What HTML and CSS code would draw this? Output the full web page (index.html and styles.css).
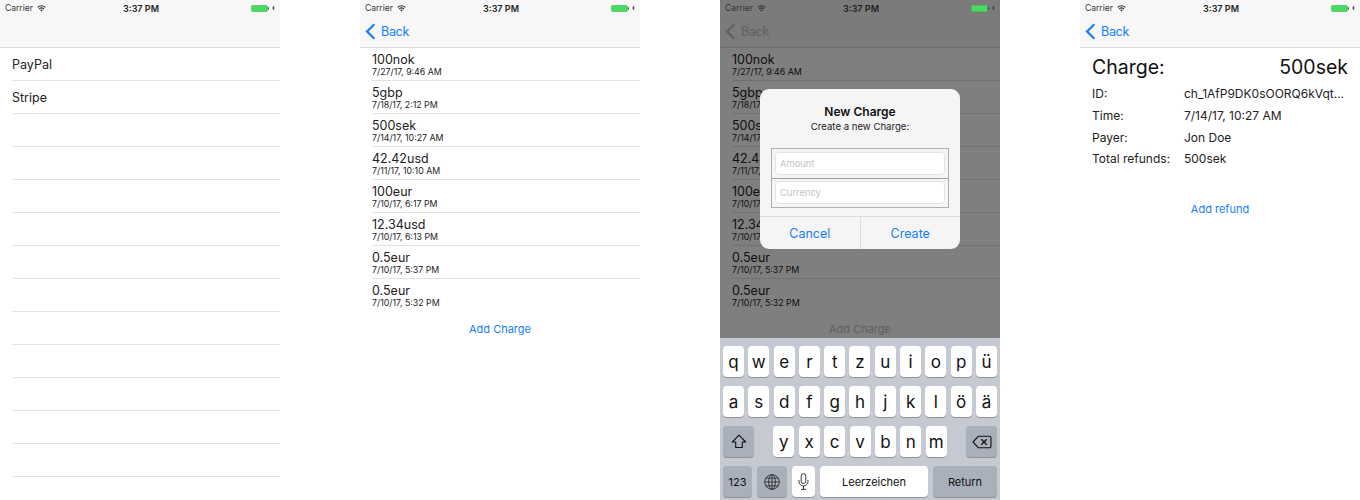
FILE: index.html
```html
<!DOCTYPE html>
<html lang="en">
<head>
  <meta charset="UTF-8">
  <title>Charges</title>
  <link rel="stylesheet" href="styles.css">
</head>
<body>
  <svg class="defs" width="0" height="0">
    <symbol id="wifi" viewBox="0 0 12 9">
      <path d="M6 8.6 4.3 6.7a2.6 2.6 0 0 1 3.4 0zM3.4 5.7l-1-1.1a5.4 5.4 0 0 1 7.2 0l-1 1.1a4 4 0 0 0-5.2 0zM1.5 3.6.4 2.4a8.3 8.3 0 0 1 11.2 0l-1.1 1.2a6.8 6.8 0 0 0-9 0z"/>
    </symbol>
    <symbol id="battery" viewBox="0 0 25 9">
      <rect x=".5" y=".5" width="21" height="8" rx="1.5" fill="#4cd964" stroke="#44c25a"/>
      <rect x="22.3" y="3" width="1.2" height="3" fill="#333"/>
    </symbol>
    <symbol id="bolt" viewBox="0 0 4 8">
      <path d="M2.6 0 .2 4.5h1.5L1.3 8l2.5-4.6H2.2z"/>
    </symbol>
    <symbol id="chevron" viewBox="0 0 11 17">
      <path d="M9.4 1.2 2 8.5l7.4 7.3" fill="none" stroke="currentColor" stroke-width="2.2"/>
    </symbol>
  </svg>

  <div class="screens">

    <section class="phone">
      <header class="nav">
        <div class="status">
          <span class="carrier">Carrier <svg class="wifi"><use href="#wifi"/></svg></span>
          <span class="time">3:37 PM</span>
          <span class="power"><svg class="battery"><use href="#battery"/></svg><svg class="bolt"><use href="#bolt"/></svg></span>
        </div>
        <div class="nav-bar"></div>
      </header>
      <ul class="list">
        <li class="row row-single">PayPal</li>
        <li class="row row-single">Stripe</li>
        <li class="row"></li>
        <li class="row"></li>
        <li class="row"></li>
        <li class="row"></li>
        <li class="row"></li>
        <li class="row"></li>
        <li class="row"></li>
        <li class="row"></li>
        <li class="row"></li>
        <li class="row"></li>
        <li class="row"></li>
      </ul>
    </section>

    <section class="phone">
      <header class="nav">
        <div class="status">
          <span class="carrier">Carrier <svg class="wifi"><use href="#wifi"/></svg></span>
          <span class="time">3:37 PM</span>
          <span class="power"><svg class="battery"><use href="#battery"/></svg><svg class="bolt"><use href="#bolt"/></svg></span>
        </div>
        <div class="nav-bar"><a class="back"><svg class="chevron"><use href="#chevron"/></svg>Back</a></div>
      </header>
      <ul class="list">
        <li class="row"><div class="amount">100nok</div><div class="date">7/27/17, 9:46 AM</div></li>
        <li class="row"><div class="amount">5gbp</div><div class="date">7/18/17, 2:12 PM</div></li>
        <li class="row"><div class="amount">500sek</div><div class="date">7/14/17, 10:27 AM</div></li>
        <li class="row"><div class="amount">42.42usd</div><div class="date">7/11/17, 10:10 AM</div></li>
        <li class="row"><div class="amount">100eur</div><div class="date">7/10/17, 6:17 PM</div></li>
        <li class="row"><div class="amount">12.34usd</div><div class="date">7/10/17, 6:13 PM</div></li>
        <li class="row"><div class="amount">0.5eur</div><div class="date">7/10/17, 5:37 PM</div></li>
        <li class="row row-last"><div class="amount">0.5eur</div><div class="date">7/10/17, 5:32 PM</div></li>
      </ul>
      <a class="link link-charge">Add Charge</a>
    </section>

    <section class="phone">
      <div class="dimmed">
        <header class="nav">
          <div class="status">
            <span class="carrier">Carrier <svg class="wifi"><use href="#wifi"/></svg></span>
            <span class="time">3:37 PM</span>
            <span class="power"><svg class="battery"><use href="#battery"/></svg><svg class="bolt"><use href="#bolt"/></svg></span>
          </div>
          <div class="nav-bar"><a class="back"><svg class="chevron"><use href="#chevron"/></svg>Back</a></div>
        </header>
        <ul class="list">
          <li class="row"><div class="amount">100nok</div><div class="date">7/27/17, 9:46 AM</div></li>
          <li class="row"><div class="amount">5gbp</div><div class="date">7/18/17, 2:12 PM</div></li>
          <li class="row"><div class="amount">500sek</div><div class="date">7/14/17, 10:27 AM</div></li>
          <li class="row"><div class="amount">42.42usd</div><div class="date">7/11/17, 10:10 AM</div></li>
          <li class="row"><div class="amount">100eur</div><div class="date">7/10/17, 6:17 PM</div></li>
          <li class="row"><div class="amount">12.34usd</div><div class="date">7/10/17, 6:13 PM</div></li>
          <li class="row"><div class="amount">0.5eur</div><div class="date">7/10/17, 5:37 PM</div></li>
          <li class="row row-last"><div class="amount">0.5eur</div><div class="date">7/10/17, 5:32 PM</div></li>
        </ul>
        <a class="link link-charge">Add Charge</a>
        <div class="overlay"></div>

        <div class="alert">
          <div class="alert-title">New Charge</div>
          <div class="alert-text">Create a new Charge:</div>
          <div class="fields">
            <div class="field">Amount</div>
            <div class="field">Currency</div>
          </div>
          <div class="alert-actions">
            <a class="alert-btn">Cancel</a>
            <a class="alert-btn">Create</a>
          </div>
        </div>
      </div>

      <div class="keyboard">
        <div class="key-row">
          <span class="key">q</span><span class="key">w</span><span class="key">e</span><span class="key">r</span><span class="key">t</span><span class="key">z</span><span class="key">u</span><span class="key">i</span><span class="key">o</span><span class="key">p</span><span class="key">ü</span>
        </div>
        <div class="key-row">
          <span class="key">a</span><span class="key">s</span><span class="key">d</span><span class="key">f</span><span class="key">g</span><span class="key">h</span><span class="key">j</span><span class="key">k</span><span class="key">l</span><span class="key">ö</span><span class="key">ä</span>
        </div>
        <div class="key-row key-row-3">
          <span class="key key-dark key-side">
            <svg width="16" height="15" viewBox="0 0 16 15"><path d="M8 1.2 1.3 8h3.4v5.5h6.6V8h3.4z" fill="none" stroke="#111" stroke-width="1.1" stroke-linejoin="round"/></svg>
          </span>
          <div class="key-letters">
            <span class="key">y</span><span class="key">x</span><span class="key">c</span><span class="key">v</span><span class="key">b</span><span class="key">n</span><span class="key">m</span>
          </div>
          <span class="key key-dark key-side">
            <svg width="20" height="14" viewBox="0 0 20 14"><path d="M6.5 1.2h11a1.5 1.5 0 0 1 1.5 1.5v8.6a1.5 1.5 0 0 1-1.5 1.5h-11L1 7z" fill="none" stroke="#111" stroke-width="1.1" stroke-linejoin="round"/><path d="m9.3 4.3 5.4 5.4m0-5.4-5.4 5.4" stroke="#111" stroke-width="1.3"/></svg>
          </span>
        </div>
        <div class="key-row key-row-4">
          <span class="key key-dark key-small key-num">123</span>
          <span class="key key-dark key-globe">
            <svg width="16" height="16" viewBox="0 0 16 16" fill="none" stroke="#222" stroke-width=".8"><circle cx="8" cy="8" r="7.3"/><ellipse cx="8" cy="8" rx="3.4" ry="7.3"/><path d="M8 .7v14.6M.7 8h14.6M1.8 4.2h12.4M1.8 11.8h12.4"/></svg>
          </span>
          <span class="key key-mic">
            <svg width="11" height="17" viewBox="0 0 11 17" fill="none" stroke="#222" stroke-width=".9"><rect x="3.2" y=".6" width="4.6" height="10" rx="2.3"/><path d="M1 7v1.5a4.5 4.5 0 0 0 9 0V7M5.5 13v3M3 16.4h5"/></svg>
          </span>
          <span class="key key-small key-space">Leerzeichen</span>
          <span class="key key-dark key-small key-return">Return</span>
        </div>
      </div>
    </section>

    <section class="phone">
      <header class="nav">
        <div class="status">
          <span class="carrier">Carrier <svg class="wifi"><use href="#wifi"/></svg></span>
          <span class="time">3:37 PM</span>
          <span class="power"><svg class="battery"><use href="#battery"/></svg><svg class="bolt"><use href="#bolt"/></svg></span>
        </div>
        <div class="nav-bar"><a class="back"><svg class="chevron"><use href="#chevron"/></svg>Back</a></div>
      </header>
      <div class="detail">
        <div class="detail-head"><span>Charge:</span><span>500sek</span></div>
        <div class="detail-row"><span class="detail-label">ID:</span><span class="detail-value">ch_1AfP9DK0sOORQ6kVqt...</span></div>
        <div class="detail-row"><span class="detail-label">Time:</span><span class="detail-value">7/14/17, 10:27 AM</span></div>
        <div class="detail-row"><span class="detail-label">Payer:</span><span class="detail-value">Jon Doe</span></div>
        <div class="detail-row"><span class="detail-label">Total refunds:</span><span class="detail-value">500sek</span></div>
      </div>
      <a class="link link-refund">Add refund</a>
    </section>

  </div>
</body>
</html>
```

FILE: styles.css
```css
* {
  margin: 0;
  padding: 0;
  box-sizing: border-box;
  list-style: none;
}

body {
  background: #fff;
  color: #222;
  font-family: Inter, "Liberation Sans", sans-serif;
  overflow: hidden;
}

.defs {
  position: absolute;
}

.screens {
  display: flex;
  gap: 80px;
  width: 1360px;
  height: 500px;
}

.phone {
  display: flex;
  flex-direction: column;
  width: 280px;
  height: 500px;
  overflow: hidden;
}

/* nav + status bar */
.nav {
  height: 48px;
  background: #f7f7f7;
  border-bottom: 1px solid #dcdcdc;
}

.status {
  position: relative;
  z-index: 2;
  display: flex;
  justify-content: space-between;
  align-items: center;
  height: 16px;
  padding: 0 5px;
  font-size: 8.5px;
  color: #333;
}

.carrier {
  display: flex;
  align-items: center;
  gap: 4px;
  width: 62px;
}

.wifi {
  width: 9px;
  height: 7px;
  fill: #333;
}

.time {
  font-size: 9px;
  font-weight: 600;
  color: #222;
}

.power {
  display: flex;
  align-items: center;
  justify-content: flex-end;
  gap: 2px;
  width: 60px;
}

.battery {
  width: 19px;
  height: 7px;
}

.bolt {
  width: 3px;
  height: 6px;
  fill: #333;
}

.nav-bar {
  display: flex;
  align-items: center;
  height: 31px;
  padding-left: 5px;
}

.back {
  display: flex;
  align-items: center;
  gap: 5px;
  font-size: 12.5px;
  letter-spacing: -0.3px;
  color: #147efb;
}

.chevron {
  width: 11px;
  height: 17px;
}

/* lists */
.list {
  padding-left: 12px;
}

.row {
  height: 33px;
  padding-top: 5px;
  border-bottom: 1px solid #e2e2e2;
}

.row-single {
  padding-top: 9px;
  font-size: 12.5px;
  line-height: 16px;
}

.row-last {
  border-bottom: none;
}

.amount {
  font-size: 12.5px;
  line-height: 13px;
}

.date {
  font-size: 8.8px;
  line-height: 12px;
}

.link {
  display: block;
  font-size: 11px;
  text-align: center;
  color: #147efb;
}

.link-charge {
  margin-top: 10px;
}

.link-refund {
  margin-top: 32px;
}

/* alert screen */
.dimmed {
  position: relative;
  height: 338px;
  overflow: hidden;
}

.dimmed .back,
.dimmed .link {
  color: #c0c0c0;
}

.overlay {
  position: absolute;
  inset: 0;
  background: rgba(0, 0, 0, 0.5);
}

.alert {
  position: absolute;
  top: 89px;
  left: 40px;
  width: 200px;
  height: 160px;
  border-radius: 9px;
  background: #f5f5f5;
  text-align: center;
}

.alert-title {
  padding-top: 15px;
  font-size: 12px;
  line-height: 15px;
  font-weight: 600;
  color: #111;
}

.alert-text {
  margin-top: 2px;
  font-size: 9.6px;
  line-height: 12px;
}

.fields {
  display: flex;
  flex-direction: column;
  margin: 15px 11px 0;
  height: 60px;
  border: 1px solid #b0b0b0;
}

.field {
  flex: 1;
  display: flex;
  align-items: center;
  margin: 3px;
  padding-left: 4px;
  border: 1px solid #e4e4e4;
  border-radius: 4px;
  background: #fff;
  font-size: 9.4px;
  color: #c4c4c4;
}

.field + .field {
  position: relative;
}

.field + .field::before {
  content: "";
  position: absolute;
  top: -4px;
  left: -4px;
  right: -4px;
  height: 1px;
  background: #a0a0a0;
}

.alert-actions {
  display: flex;
  margin-top: 8px;
  height: 33px;
  border-top: 1px solid #dedede;
}

.alert-btn {
  flex: 1;
  display: flex;
  align-items: center;
  justify-content: center;
  font-size: 12.5px;
  color: #147efb;
}

.alert-btn + .alert-btn {
  border-left: 1px solid #dedede;
}

/* keyboard */
.keyboard {
  display: flex;
  flex-direction: column;
  gap: 9px;
  height: 162px;
  padding: 8px 3px 0;
  background: #c5cad2;
}

.key-row {
  display: flex;
  justify-content: space-between;
  height: 31px;
}

.key {
  display: flex;
  align-items: center;
  justify-content: center;
  width: 21px;
  border-radius: 4px;
  background: #fff;
  box-shadow: 0 1px 0 #8e9197;
  font-size: 17px;
  color: #111;
}

.key-dark {
  background: #a9b0bb;
}

.key-side {
  width: 31px;
}

.key-letters {
  display: flex;
  gap: 4.4px;
}

.key-small {
  font-size: 11px;
}

.key-row-4 {
  gap: 5px;
  justify-content: flex-start;
}

.key-num {
  width: 29px;
}

.key-globe {
  width: 30px;
}

.key-mic {
  width: 23px;
}

.key-space {
  width: 108px;
}

.key-return {
  width: 64px;
}

/* detail screen */
.detail {
  padding: 4px 12px 0;
}

.detail-head {
  display: flex;
  justify-content: space-between;
  height: 30px;
  margin-bottom: 1px;
  align-items: center;
  font-size: 19.5px;
  color: #111;
}

.detail-row {
  display: flex;
  align-items: center;
  height: 21.7px;
  font-size: 12px;
}

.detail-label {
  width: 92px;
}
```
